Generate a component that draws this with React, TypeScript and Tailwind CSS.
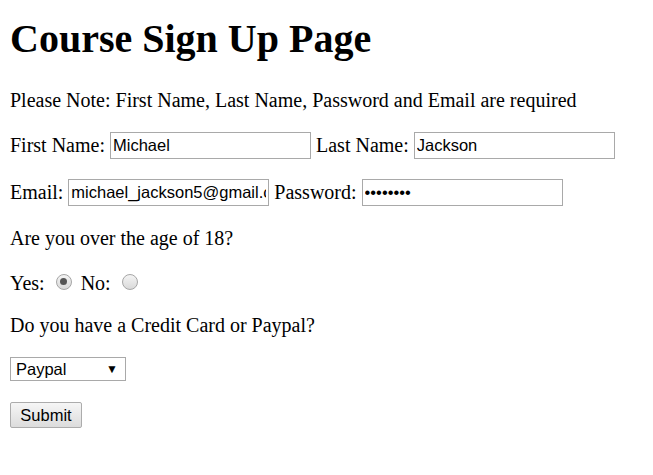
import { useState } from 'react';

// Plain course sign up form, default-browser look
function Radio({ checked, onClick }: { checked: boolean; onClick: () => void }) {
  return (
    <span
      onClick={onClick}
      className="inline-flex h-[16px] w-[16px] cursor-pointer items-center justify-center rounded-full border border-[#a6a6a6] bg-gradient-to-b from-[#f4f4f4] to-[#d9d9d9]"
    >
      {checked && <span className="h-[7px] w-[7px] rounded-full bg-[#555]" />}
    </span>
  );
}

export default function App() {
  const [first, setFirst] = useState('Michael');
  const [last, setLast] = useState('Jackson');
  const [email, setEmail] = useState('michael_jackson5@gmail.com');
  const [pass, setPass] = useState('password');
  const [adult, setAdult] = useState(true);

  const inputCls =
    "h-[27px] w-[201px] border border-[#a9a9a9] bg-white px-[2px] text-[16.5px] text-black outline-none [font-family:'Liberation_Sans',sans-serif]";

  return (
    <div className="min-h-screen bg-white px-[10px] text-[20px] text-black [font-family:'Liberation_Serif',serif]">
      <h1 className="pt-[16px] text-[40px] font-bold leading-[46px]">Course Sign Up Page</h1>

      <div className="mt-[27px] leading-[23px]">
        Please Note: First Name, Last Name, Password and Email are required
      </div>

      <div className="mt-[20px] flex items-center leading-[23px]">
        <span>First Name:</span>
        <input className={`ml-[5px] ${inputCls}`} value={first} onChange={(e) => setFirst(e.target.value)} />
        <span className="ml-[5px]">Last Name:</span>
        <input className={`ml-[5px] ${inputCls}`} value={last} onChange={(e) => setLast(e.target.value)} />
      </div>

      <div className="mt-[20px] flex items-center leading-[23px]">
        <span>Email:</span>
        <input className={`ml-[5px] ${inputCls}`} value={email} onChange={(e) => setEmail(e.target.value)} />
        <span className="ml-[5px]">Password:</span>
        <input
          type="password"
          className={`ml-[5px] ${inputCls}`}
          value={pass}
          onChange={(e) => setPass(e.target.value)}
        />
      </div>

      <div className="mt-[21px] leading-[23px]">Are you over the age of 18?</div>

      <div className="mt-[22px] flex items-center leading-[23px]">
        <span>Yes:</span>
        <span className="ml-[11px] -mt-[4px] flex">
          <Radio checked={adult} onClick={() => setAdult(true)} />
        </span>
        <span className="ml-[9px]">No:</span>
        <span className="ml-[11px] -mt-[4px] flex">
          <Radio checked={!adult} onClick={() => setAdult(false)} />
        </span>
      </div>

      <div className="mt-[19px] leading-[23px]">Do you have a Credit Card or Paypal?</div>

      <div className="mt-[20px] flex h-[24px] w-[116px] items-center justify-between border border-[#a9a9a9] bg-white pl-[5px] pr-[7px] text-[16.5px] [font-family:'Liberation_Sans',sans-serif]">
        <span>Paypal</span>
        <span className="text-[12px]">▼</span>
      </div>

      <button className="mt-[21px] flex h-[26px] w-[72px] items-center justify-center rounded-[2px] border border-[#acacac] bg-gradient-to-b from-[#f6f6f6] to-[#dcdcdc] text-[16.5px] [font-family:'Liberation_Sans',sans-serif]">
        Submit
      </button>
    </div>
  );
}
